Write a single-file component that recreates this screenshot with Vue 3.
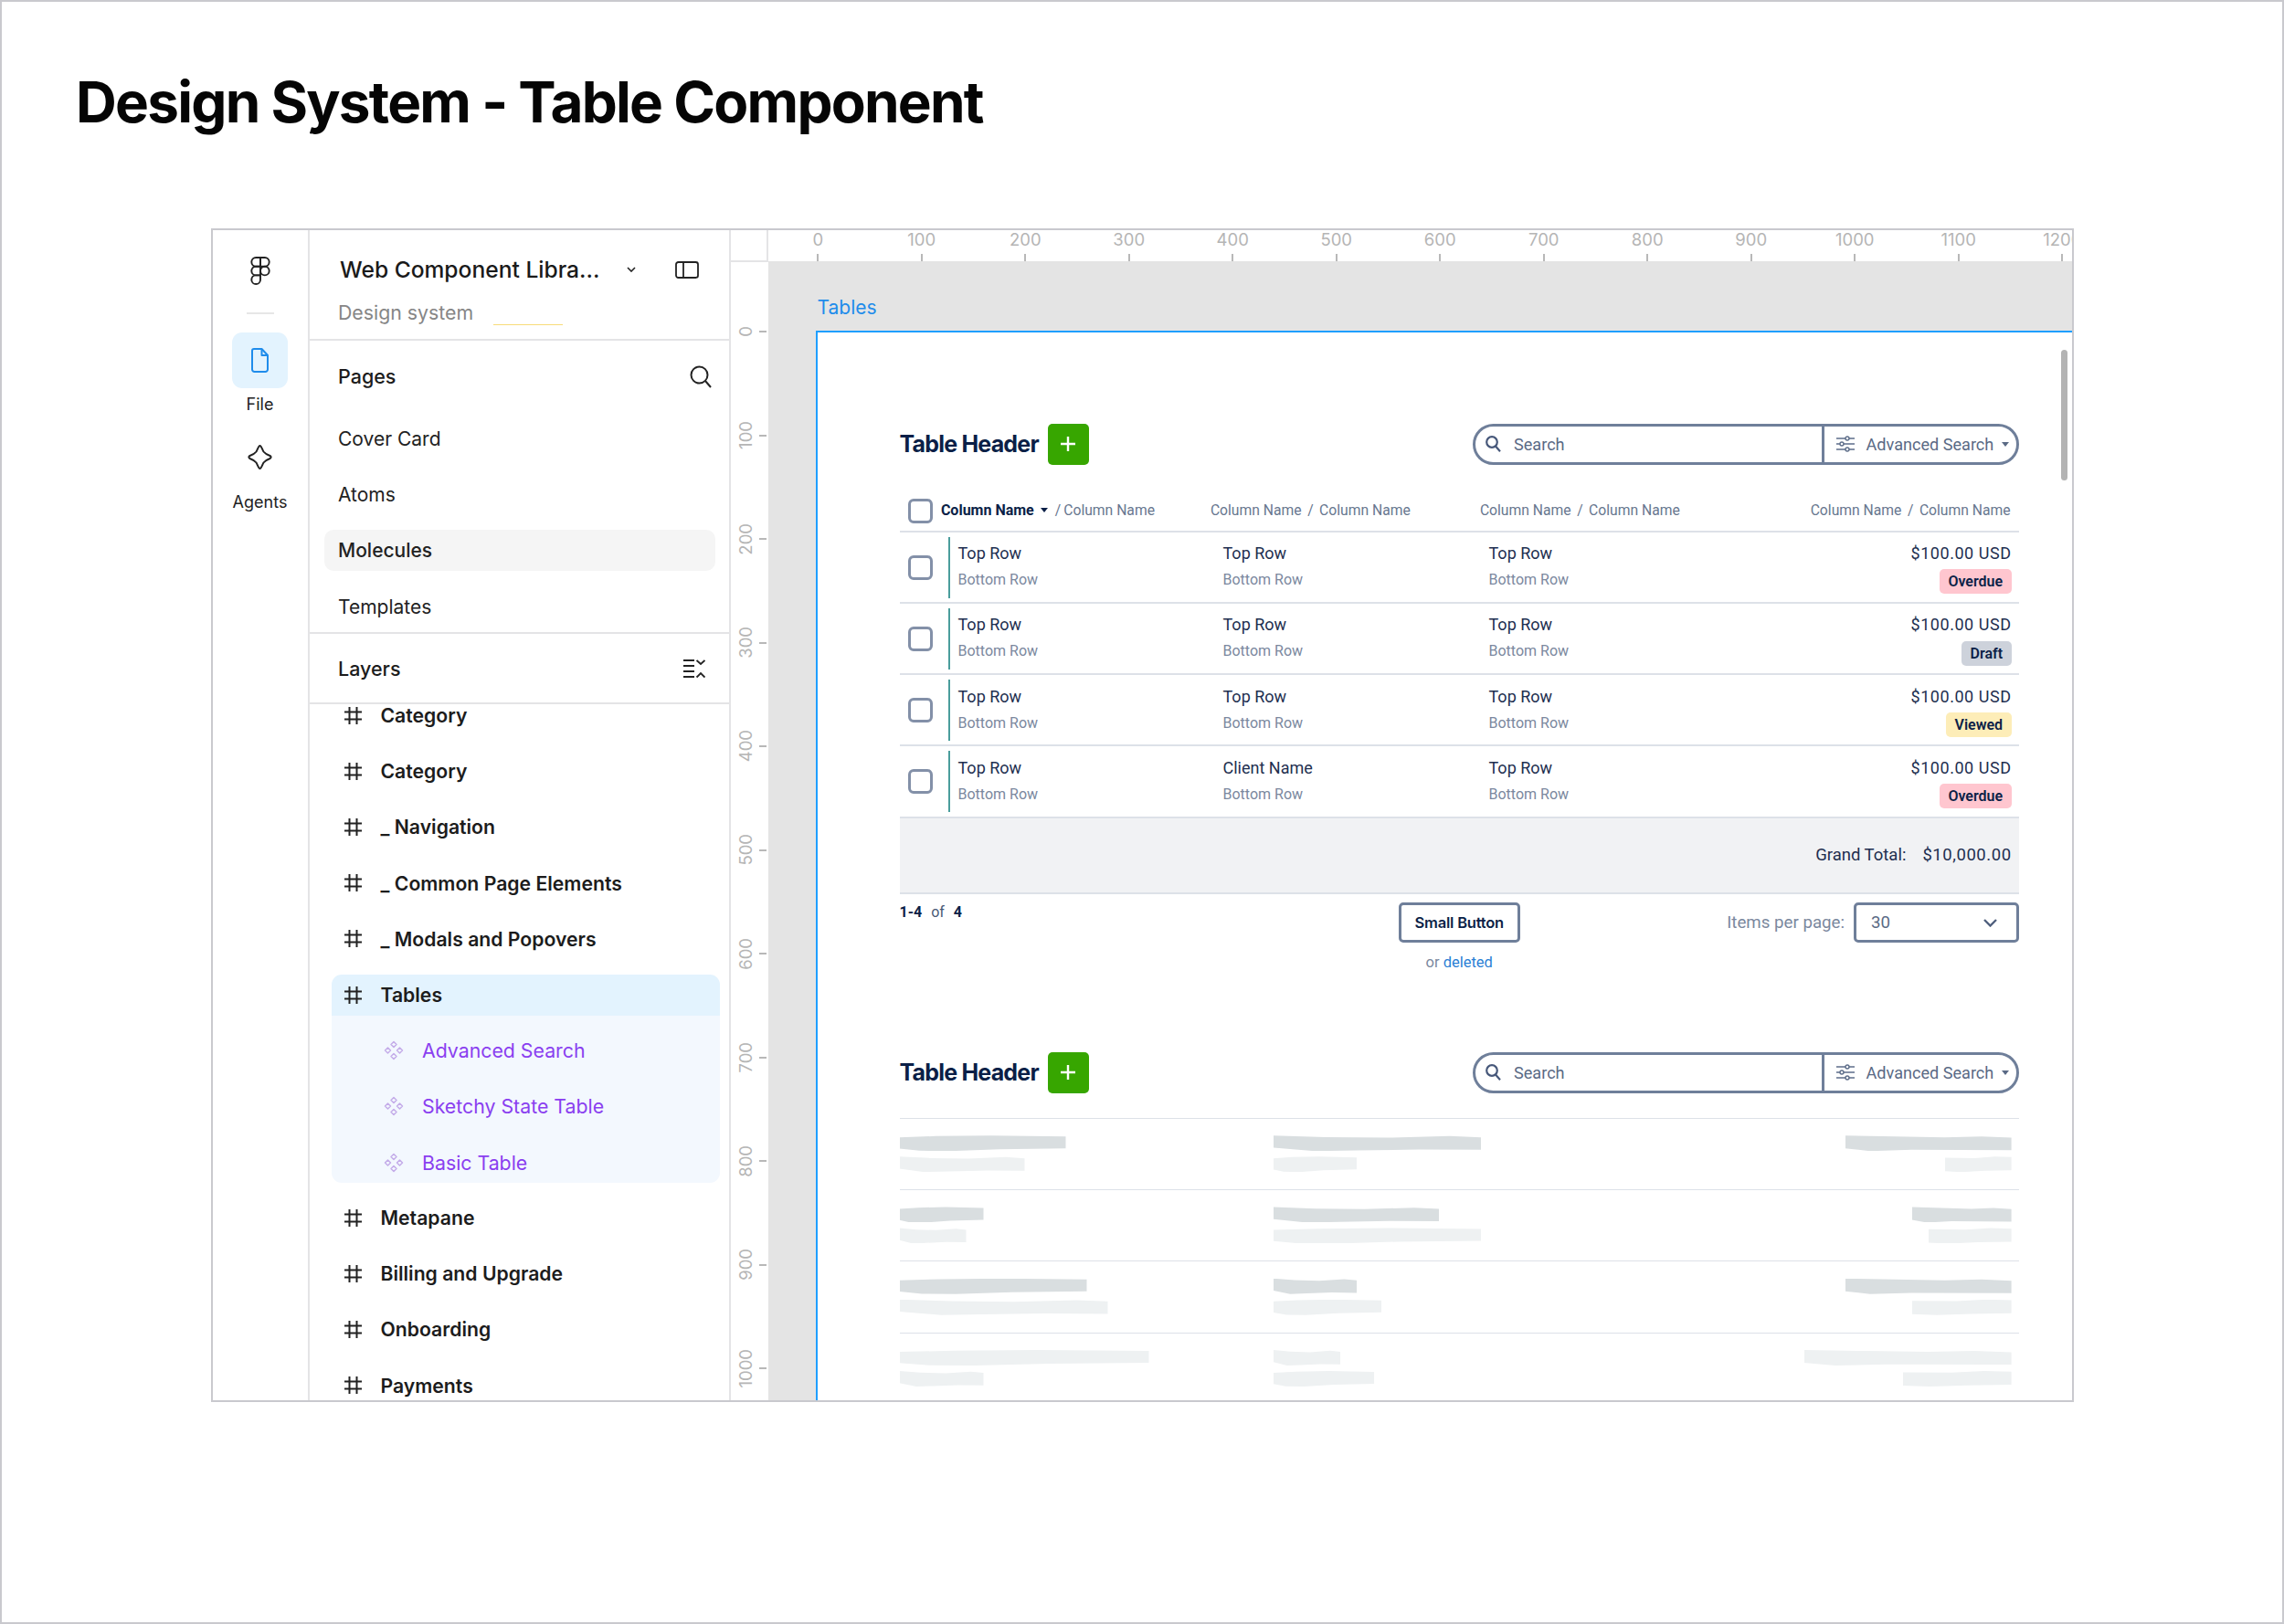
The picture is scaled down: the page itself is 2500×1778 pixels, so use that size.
<script setup>
const pages = ['Cover Card', 'Atoms', 'Molecules', 'Templates']
const layersTop = ['Category', 'Category', '_ Navigation', '_ Common Page Elements', '_ Modals and Popovers']
const subs = ['Advanced Search', 'Sketchy State Table', 'Basic Table']
const layersBottom = ['Metapane', 'Billing and Upgrade', 'Onboarding', 'Payments']
const hTicks = [0, 100, 200, 300, 400, 500, 600, 700, 800, 900, 1000, 1100, 1200]
const vTicks = [0, 100, 200, 300, 400, 500, 600, 700, 800, 900, 1000]
const rows = [
  { second: 'Top Row', status: 'Overdue', kind: 'pink' },
  { second: 'Top Row', status: 'Draft', kind: 'gray' },
  { second: 'Top Row', status: 'Viewed', kind: 'yellow' },
  { second: 'Client Name', status: 'Overdue', kind: 'pink' }
]
const skeleton = [
  { light: false, a: [182, 137], b: [227, 91], c: [182, 73] },
  { light: false, a: [92, 73], b: [181, 227], c: [109, 91] },
  { light: false, a: [205, 228], b: [91, 118], c: [182, 109] },
  { light: true, a: [273, 92], b: [73, 110], c: [227, 119] }
]
</script>

<template>
  <div class="page">
    <h1 class="title">Design System - Table Component</h1>
    <div class="panel">
      <aside class="rail">
        <svg class="logo" viewBox="0 0 22 32" fill="none" stroke="#222" stroke-width="2">
          <path d="M11 1H6a5 5 0 0 0 0 10h5z" />
          <path d="M11 1h5a5 5 0 0 1 0 10h-5z" />
          <path d="M11 11H6a5 5 0 0 0 0 10h5z" />
          <circle cx="16" cy="16" r="5" />
          <path d="M6 21h5v5a5 5 0 1 1-5-5z" />
        </svg>
        <div class="rail-rule"></div>
        <div class="file-tile">
          <svg width="19" height="27" viewBox="0 0 19 27" fill="none" stroke="#1f8ceb" stroke-width="2" stroke-linejoin="round">
            <path d="M3 1h8.5L18 8v15.5a2.5 2.5 0 0 1-2.5 2.5H3.5A2.5 2.5 0 0 1 1 23.500V3a2 2 0 0 1 2-2z" />
            <path d="M11.500 1.500V8H18" />
          </svg>
        </div>
        <div class="rail-label">File</div>
        <svg class="star" width="27" height="27" viewBox="0 0 27 27" fill="none" stroke="#222" stroke-width="2" stroke-linejoin="round">
          <path d="M13.500 1C15 1 16 5 17.500 7.500 19 9.500 22 11 24.500 12 26 12.800 26 14.200 24.500 15 22 16 19 17.500 17.500 19.500 16 22 15 26 13.500 26 12 26 11 22 9.500 19.500 8 17.500 5 16 2.500 15 1 14.200 1 12.800 2.500 12 5 11 8 9.500 9.500 7.500 11 5 12 1 13.500 1z" />
        </svg>
        <div class="rail-label agents">Agents</div>
      </aside>

      <aside class="side">
        <div class="side-head">
          <div class="file-row">
            <span class="file-name">Web Component Libra...</span>
            <svg class="chev" width="10" height="6" viewBox="0 0 10 6" fill="none" stroke="#222" stroke-width="1.600"><path d="M1 1l4 4 4-4" /></svg>
            <svg class="dock" width="26" height="19" viewBox="0 0 26 19" fill="none" stroke="#222" stroke-width="1.800">
              <rect x="1" y="1" width="24" height="17" rx="2.500" />
              <path d="M9 1v17" />
            </svg>
          </div>
          <div class="design-row">
            <span class="design-label">Design system</span>
            <span class="yellow-line"></span>
          </div>
        </div>

        <div class="pages">
          <div class="section-row">
            <span class="section-name">Pages</span>
            <svg width="24" height="25" viewBox="0 0 24 25" fill="none" stroke="#222" stroke-width="2"><circle cx="10.500" cy="10.500" r="9" /><path d="M17 17l6 7" /></svg>
          </div>
          <div class="page-list">
            <div v-for="p in pages" :key="p" class="page-item" :class="{ active: p === 'Molecules' }">{{ p }}</div>
          </div>
        </div>

        <div class="layers-head">
          <span class="section-name">Layers</span>
          <svg width="24" height="22" viewBox="0 0 24 22" fill="none" stroke="#222" stroke-width="1.900">
            <path d="M0 2h12M0 8h12M0 14h12M0 20h12" />
            <path d="M14.500 2l4.500 4 4.500-4M14.500 20.500l4.500-4.500 4.500 4.500" />
          </svg>
        </div>

        <div class="layer-scroll">
          <div class="layer-list">
            <div v-for="(l, i) in layersTop" :key="i" class="layer">
              <svg class="hash" viewBox="0 0 19 19" fill="none" stroke="#222" stroke-width="2"><path d="M5.500 0v19M13.500 0v19M0 5.500h19M0 13.500h19" /></svg>
              <span>{{ l }}</span>
            </div>
            <div class="group">
              <div class="group-head">
                <svg class="hash" viewBox="0 0 19 19" fill="none" stroke="#222" stroke-width="2"><path d="M5.500 0v19M13.500 0v19M0 5.500h19M0 13.500h19" /></svg>
                <span>Tables</span>
              </div>
              <div class="group-body">
                <div v-for="s in subs" :key="s" class="sub">
                  <svg class="comp" width="22" height="22" viewBox="0 0 22 22" fill="none" stroke="#c4ace9" stroke-width="1.500" stroke-linejoin="round">
                    <path d="M11 1.500l3 3-3 3-3-3z" />
                    <path d="M4.500 8l3 3-3 3-3-3z" />
                    <path d="M17.500 8l3 3-3 3-3-3z" />
                    <path d="M11 14.500l3 3-3 3-3-3z" />
                  </svg>
                  <span>{{ s }}</span>
                </div>
              </div>
            </div>
            <div v-for="l in layersBottom" :key="l" class="layer">
              <svg class="hash" viewBox="0 0 19 19" fill="none" stroke="#222" stroke-width="2"><path d="M5.500 0v19M13.500 0v19M0 5.500h19M0 13.500h19" /></svg>
              <span>{{ l }}</span>
            </div>
          </div>
        </div>
      </aside>

      <section class="work">
        <div class="top-bar">
          <div class="corner"></div>
          <div class="h-ruler">
            <div v-for="t in hTicks" :key="t" class="h-cell">
              <span class="h-num">{{ t }}</span>
              <span class="h-tick"></span>
            </div>
          </div>
        </div>
        <div class="work-body">
          <div class="v-ruler">
            <div v-for="t in vTicks" :key="t" class="v-cell">
              <span class="v-num">{{ t }}</span>
              <span class="v-tick"></span>
            </div>
          </div>
          <div class="canvas">
            <div class="frame-label">Tables</div>
            <div class="frame">
              <div class="scrollbar"></div>

              <div class="t-header">
                <div class="t-title">
                  <span>Table Header</span>
                  <button class="add">
                    <svg width="16" height="16" viewBox="0 0 16 16" stroke="#fff" stroke-width="2.400"><path d="M8 0v16M0 8h16" /></svg>
                  </button>
                </div>
                <div class="searchbar">
                  <div class="search-left">
                    <svg width="17" height="18" viewBox="0 0 17 18" fill="none" stroke="#47587a" stroke-width="2.200"><circle cx="7" cy="7" r="5.800" /><path d="M11 11.500l5 5.800" /></svg>
                    <span>Search</span>
                  </div>
                  <div class="search-right">
                    <svg width="20" height="18" viewBox="0 0 20 18" fill="none" stroke="#5e6e8a" stroke-width="1.400">
                      <path d="M0 3h10M14 3h6M0 9h4M8 9h12M0 15h10M14 15h6" />
                      <circle cx="12" cy="3" r="2" /><circle cx="6" cy="9" r="2" /><circle cx="12" cy="15" r="2" />
                    </svg>
                    <span>Advanced Search</span>
                    <i class="caret"></i>
                  </div>
                </div>
              </div>

              <div class="t-head">
                <span class="check"></span>
                <div class="th"><b>Column Name</b><i class="caret dark"></i><span class="sl">/</span><span>Column Name</span></div>
                <div class="th"><span>Column Name</span><span class="sl">/</span><span>Column Name</span></div>
                <div class="th"><span>Column Name</span><span class="sl">/</span><span>Column Name</span></div>
                <div class="th end"><span>Column Name</span><span class="sl">/</span><span>Column Name</span></div>
              </div>

              <div v-for="(r, i) in rows" :key="i" class="t-row">
                <span class="check"></span>
                <div class="cell first"><div class="top">Top Row</div><div class="bottom">Bottom Row</div></div>
                <div class="cell"><div class="top">{{ r.second }}</div><div class="bottom">Bottom Row</div></div>
                <div class="cell"><div class="top">Top Row</div><div class="bottom">Bottom Row</div></div>
                <div class="cell money"><div class="top">$100.00 USD</div><span class="badge" :class="r.kind">{{ r.status }}</span></div>
              </div>

              <div class="t-total">
                <span>Grand Total:</span>
                <span class="total-value">$10,000.00</span>
              </div>

              <div class="t-foot">
                <div class="count"><b>1-4</b><span>of</span><b>4</b></div>
                <div class="foot-mid">
                  <button class="small-btn">Small Button</button>
                  <div class="or">or <a>deleted</a></div>
                </div>
                <div class="per-page">
                  <span>Items per page:</span>
                  <div class="select">
                    <span>30</span>
                    <svg width="15" height="9" viewBox="0 0 15 9" fill="none" stroke="#4f5f7d" stroke-width="2.400"><path d="M1 1l6.500 6.500L14 1" /></svg>
                  </div>
                </div>
              </div>

              <div class="t-header second">
                <div class="t-title">
                  <span>Table Header</span>
                  <button class="add">
                    <svg width="16" height="16" viewBox="0 0 16 16" stroke="#fff" stroke-width="2.400"><path d="M8 0v16M0 8h16" /></svg>
                  </button>
                </div>
                <div class="searchbar">
                  <div class="search-left">
                    <svg width="17" height="18" viewBox="0 0 17 18" fill="none" stroke="#47587a" stroke-width="2.200"><circle cx="7" cy="7" r="5.800" /><path d="M11 11.500l5 5.800" /></svg>
                    <span>Search</span>
                  </div>
                  <div class="search-right">
                    <svg width="20" height="18" viewBox="0 0 20 18" fill="none" stroke="#5e6e8a" stroke-width="1.400">
                      <path d="M0 3h10M14 3h6M0 9h4M8 9h12M0 15h10M14 15h6" />
                      <circle cx="12" cy="3" r="2" /><circle cx="6" cy="9" r="2" /><circle cx="12" cy="15" r="2" />
                    </svg>
                    <span>Advanced Search</span>
                    <i class="caret"></i>
                  </div>
                </div>
              </div>

              <div v-for="(s, i) in skeleton" :key="i" class="sk-row" :class="{ light: s.light }">
                <div class="sk-col">
                  <i class="sk dark s1" :style="{ width: s.a[0] + 'px' }"></i>
                  <i class="sk s2" :style="{ width: s.a[1] + 'px' }"></i>
                </div>
                <div class="sk-col">
                  <i class="sk dark s2" :style="{ width: s.b[0] + 'px' }"></i>
                  <i class="sk s1" :style="{ width: s.b[1] + 'px' }"></i>
                </div>
                <div class="sk-col right">
                  <i class="sk dark s3" :style="{ width: s.c[0] + 'px' }"></i>
                  <i class="sk s4" :style="{ width: s.c[1] + 'px' }"></i>
                </div>
              </div>
            </div>
          </div>
        </div>
      </section>
    </div>
  </div>
</template>

<style>
html, body { margin: 0; background: #fff; }
</style>

<style scoped>
* { box-sizing: border-box; }
.page {
  width: 2500px; height: 1778px; border: 2px solid #c9c9ce; background: #fff;
  padding: 0 0 0 229px; overflow: hidden; font-family: Inter, "Liberation Sans", sans-serif; color: #1c1c1c;
}
.title {
  margin: 0 0 0 -148px; height: 248px; padding-top: 75px; font-size: 62px; line-height: 70px;
  font-weight: 700; color: #050505; letter-spacing: -1.750px; white-space: nowrap;
}
.panel {
  width: 2039px; height: 1285px; border: 2px solid #c9c9ce; display: flex; background: #fff;
}

/* rail */
.rail {
  width: 106px; flex: none; border-right: 2px solid #e4e4e6; display: flex; flex-direction: column; align-items: center; padding: 29px 1px 0 0;
}
.logo { width: 22px; height: 31px; display: block; }
.rail-rule { width: 30px; height: 2px; background: #e6e6e6; margin-top: 30px; }
.file-tile { width: 61px; height: 61px; border-radius: 11px; background: #e3f3fe; margin-top: 20px; display: flex; align-items: center; justify-content: center; flex: none; }
.rail-label { font-size: 18px; line-height: 22px; margin-top: 7px; color: #222; }
.star { margin-top: 33px; }
.rail-label.agents { margin-top: 25px; }

/* sidebar */
.side { width: 460.500px; flex: none; border-right: 2px solid #e4e4e6; display: flex; flex-direction: column; }
.side-head { height: 121px; border-bottom: 2px solid #e4e4e6; padding: 27px 0 0 31px; }
.file-row { display: flex; align-items: center; height: 32px; padding-left: 2px; }
.file-name { font-size: 24.600px; font-weight: 500; color: #1a1a1a; width: 314px; white-space: nowrap; }
.dock { margin-left: 43px; }
.design-row { display: flex; align-items: flex-end; height: 28px; margin-top: 17px; }
.design-label { font-size: 21.300px; line-height: 28px; color: #868686; }
.yellow-line { width: 76px; height: 1px; background: #f8dc7a; margin-left: 22px; }
.pages { height: 321px; border-bottom: 2px solid #e4e4e6; padding-top: 19px; }
.section-row { display: flex; justify-content: space-between; align-items: center; height: 40px; padding: 0 19px 0 31px; }
.section-name { font-size: 21.500px; font-weight: 500; color: #1c1c1c; }
.page-list { display: flex; flex-direction: column; gap: 16.200px; margin: 26px 15px 0 16px; }
.page-item { height: 45px; line-height: 45px; padding-left: 15px; font-size: 21px; border-radius: 10px; color: #222; }
.page-item.active { background: #f5f5f5; font-weight: 500; }
.layers-head { height: 77px; border-bottom: 2px solid #e4e4e6; display: flex; justify-content: space-between; align-items: center; padding: 0 26px 0 31px; flex: none; }
.layer-scroll { flex: 1; overflow: hidden; }
.layer-list { margin-top: -18.500px; }
.layer { height: 61.200px; display: flex; align-items: center; gap: 21px; padding-left: 37.500px; font-size: 21.200px; font-weight: 600; color: #1c1c1c; }
.hash { width: 19px; height: 19px; flex: none; }
.group { margin: 8.400px 10px 7.400px 24px; border-radius: 11px; overflow: hidden; }
.group-head { height: 45px; display: flex; align-items: center; gap: 21px; padding-left: 13.500px; background: #e3f3fe; font-size: 21.200px; font-weight: 600; color: #1c1c1c; }
.group-body { background: #f3f8fe; padding-top: 15.900px; display: flex; flex-direction: column; gap: 16.200px; }
.sub { height: 45px; display: flex; align-items: center; gap: 20px; padding-left: 57px; font-size: 21.300px; color: #8a3ff0; }

/* workspace */
.work { flex: 1; display: flex; flex-direction: column; min-width: 0; }
.top-bar { display: flex; height: 35px; flex: none; }
.corner { width: 41px; flex: none; border-right: 2px solid #e4e4e6; border-bottom: 2px solid #e4e4e6; }
.h-ruler { flex: 1; display: flex; overflow: hidden; padding-left: 0; margin-left: -2px; }
.h-cell { width: 113.500px; flex: none; display: flex; flex-direction: column; align-items: center; }
.h-num { font-size: 18.500px; line-height: 20px; color: #b5b5b5; height: 26px; }
.h-tick { width: 2px; height: 9px; background: #b8b8b8; }
.work-body { flex: 1; display: flex; min-height: 0; }
.v-ruler { width: 41px; flex: none; padding-top: 19.250px; overflow: hidden; }
.v-cell { height: 113.500px; display: flex; align-items: center; padding-left: 6px; }
.v-num { writing-mode: vertical-rl; transform: rotate(180deg); font-size: 18.500px; line-height: 20px; width: 20px; text-align: center; color: #b5b5b5; }
.v-tick { width: 8px; height: 2px; background: #b8b8b8; margin-left: 5px; }
.canvas { flex: 1; background: #e4e4e4; padding: 37px 0 0 52px; display: flex; flex-direction: column; min-width: 0; margin-top: -1px; }
.frame-label { font-size: 21px; line-height: 28px; height: 28px; color: #1f8ceb; margin-left: 2px; }
.frame { flex: 1; margin-top: 11px; border-left: 2.500px solid #1f9fff; border-top: 2.500px solid #1f9fff; background: #fff; position: relative; overflow: hidden; padding: 99.500px 58px 0 90px; }
.scrollbar { position: absolute; top: 19px; right: 5px; width: 7px; height: 143px; border-radius: 4px; background: #b3b3b3; }

.t-header { display: flex; justify-content: space-between; height: 45px; }
.t-header.second { margin-top: 87.500px; margin-bottom: 27px; }
.t-title { display: flex; align-items: center; gap: 10px; font-size: 25px; font-weight: 700; color: #0b1f47; letter-spacing: -.800px; }
.add { width: 45px; height: 45px; border: 0; padding: 0; border-radius: 5px; background: #37a600; display: flex; align-items: center; justify-content: center; }
.searchbar { width: 598px; height: 45px; border: 3px solid #6f7f9a; border-radius: 23px; display: flex; font-family: Roboto, sans-serif; font-size: 18.100px; color: #5a6a85; }
.search-left { width: 381.500px; flex: none; border-right: 3px solid #6f7f9a; display: flex; align-items: center; gap: 14px; padding-left: 11px; }
.search-right { flex: 1; display: flex; align-items: center; padding-left: 13px; }
.search-right span { margin-left: 13px; white-space: nowrap; }
.caret { display: block; width: 0; height: 0; border-left: 4.500px solid transparent; border-right: 4.500px solid transparent; border-top: 5px solid #5a6a85; margin-left: 9px; }
.caret.dark { border-top-color: #0b1f47; margin: 0 1.500px 0 7px; }

.t-head { display: grid; grid-template-columns: 36.400px 295px 295px 295px 1fr; height: 37px; padding: 0 9.400px 0 9px; border-bottom: 2px solid #dde1e8; margin-top: 37px; align-items: start; font-family: Roboto, sans-serif; font-size: 15.700px; color: #68778f; }
.th { display: flex; align-items: center; height: 25px; white-space: nowrap; }
.th b { color: #0b1f47; font-weight: 700; font-size: 16px; }
.th .sl { margin: 0 6.500px; }
.th b ~ .sl { margin: 0 3px 0 6.500px; }
.th.end { justify-content: flex-end; }
.check { display: block; width: 27px; height: 27px; border: 3px solid #8390a8; border-radius: 6px; }
.t-row { display: grid; grid-template-columns: 44px 301px 291px 291px 1fr; height: 78.300px; padding: 0 8.400px 0 9px; border-bottom: 2px solid #dde1e8; align-items: start; font-family: Roboto, sans-serif; }
.t-row > .check { margin-top: 25px; }
.cell { padding-top: 11.600px; }
.cell.first { border-left: 2.500px solid #4a9d9c; padding-left: 9px; margin-top: 5px; padding-top: 6.600px; height: 67px; }
.top { font-size: 18px; line-height: 24px; color: #1e2f50; white-space: nowrap; }
.bottom { font-size: 16px; line-height: 22px; margin-top: 6px; color: #7b889e; white-space: nowrap; }
.money { display: flex; flex-direction: column; align-items: flex-end; }
.money .top { letter-spacing: .55px; }
.badge { height: 27px; line-height: 27px; margin-top: 5.400px; padding: 0 9.500px; border-radius: 5px; font-size: 16px; font-weight: 600; color: #0b1f47; }
.pink { background: #ffc6cf; }
.gray { background: #cdd2db; }
.yellow { background: #fdedb8; }
.t-total { height: 83.500px; background: #f1f2f4; border-bottom: 2px solid #dde1e8; display: flex; justify-content: flex-end; align-items: center; gap: 18px; padding-right: 8.400px; font-family: Roboto, sans-serif; font-size: 18.500px; color: #1e2f50; }
.total-value { letter-spacing: .55px; }
.t-foot { display: grid; grid-template-columns: 1fr auto 1fr; margin-top: 9px; font-family: Roboto, sans-serif; }
.count { display: flex; gap: 10px; font-size: 16px; line-height: 22px; color: #4a5a76; }
.count b { color: #0b1f47; font-weight: 700; }
.foot-mid { display: flex; flex-direction: column; align-items: center; }
.small-btn { width: 133px; height: 44px; border: 3px solid #6f7f9a; border-radius: 5px; background: #fff; font-family: Inter, sans-serif; font-size: 16.500px; font-weight: 600; color: #0b1f47; letter-spacing: -.2px; padding: 0; }
.or { font-size: 16.500px; line-height: 20px; margin-top: 12px; color: #7b889e; }
.or a { color: #2a7fd5; }
.per-page { display: flex; justify-content: flex-end; gap: 10px; font-size: 18.700px; color: #7b889e; height: 44px; align-items: center; }
.select { width: 181px; height: 44px; border: 3px solid #6f7f9a; border-radius: 5px; display: flex; align-items: center; justify-content: space-between; padding: 0 21px 0 16px; color: #5a6a85; }

.sk-row { height: 78.300px; border-top: 1.500px solid #dde1e8; display: grid; grid-template-columns: 409.500px 1fr 1fr; padding: 18.500px 8.400px 0 0; }
.sk-col { display: flex; flex-direction: column; gap: 6px; }
.sk-col.right { align-items: flex-end; }
.sk { display: block; height: 17px; background: #eef1f2; }
.sk.dark { background: #d9dee0; }
.sk-row.light .sk.dark { background: #eef1f2; }
.s1 { clip-path: polygon(0 12%, 22% 4%, 55% 0, 100% 6%, 100% 82%, 60% 88%, 30% 100%, 12% 98%, 0 84%); }
.s2 { clip-path: polygon(0 0, 25% 10%, 55% 14%, 85% 4%, 100% 12%, 100% 92%, 70% 90%, 40% 96%, 20% 100%, 0 78%); }
.s3 { clip-path: polygon(0 0, 30% 6%, 60% 12%, 82% 6%, 100% 14%, 100% 94%, 40% 92%, 15% 100%, 0 82%); }
.s4 { clip-path: polygon(0 8%, 45% 10%, 75% 0, 100% 4%, 100% 88%, 60% 92%, 25% 100%, 0 94%); }
</style>
